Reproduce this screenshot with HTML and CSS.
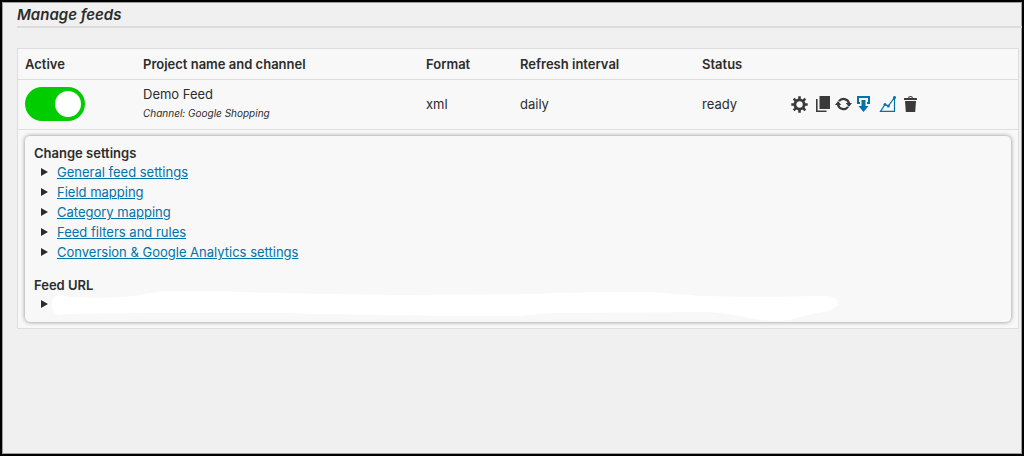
FILE: index.html
```html
<!DOCTYPE html>
<html lang="en">
<head>
  <meta charset="UTF-8" />
  <meta name="viewport" content="width=device-width, initial-scale=1" />
  <title>Manage feeds</title>
  <link rel="stylesheet" href="styles.css">
</head>
<body>

<main class="wrap">
  <h1 class="page-title">Manage feeds</h1>

  <table class="feeds">
    <colgroup>
      <col class="col-active">
      <col class="col-project">
      <col class="col-format">
      <col class="col-refresh">
      <col class="col-status">
      <col>
    </colgroup>
    <thead>
      <tr>
        <th>Active</th>
        <th>Project name and channel</th>
        <th>Format</th>
        <th>Refresh interval</th>
        <th>Status</th>
        <th></th>
      </tr>
    </thead>
    <tbody>
      <tr class="feed-row">
        <td><input type="checkbox" class="switch" id="feedActive" checked></td>
        <td>
          <label class="feed-name" for="feedActive">Demo Feed</label>
          <div class="feed-channel">Channel: Google Shopping</div>
        </td>
        <td>xml</td>
        <td>daily</td>
        <td>ready</td>
        <td>
          <div class="actions">
            <button type="button" class="action" aria-label="Settings">
              <svg width="17" height="17" viewBox="0 0 17 17">
                <circle cx="8.5" cy="8.5" r="4.6" fill="none" stroke="currentColor" stroke-width="2.8"/>
                <path d="M8.5 .3v3M8.5 13.700v3M.3 8.500h3M13.700 8.500h3M2.700 2.700l2.100 2.100M12.200 12.200l2.100 2.100M14.300 2.700l-2.100 2.100M4.800 12.200l-2.100 2.100" stroke="currentColor" stroke-width="2.600"/>
              </svg>
            </button>
            <div class="action-group">
              <button type="button" class="action" aria-label="Copy">
                <svg width="14" height="16" viewBox="0 0 14 16">
                  <path d="M3.500 0H14v13H3.500z" fill="currentColor"/>
                  <path d="M.8 3v12.200H10.500" fill="none" stroke="currentColor" stroke-width="1.600"/>
                </svg>
              </button>
              <button type="button" class="action" aria-label="Refresh">
                <svg width="17" height="16" viewBox="0 0 17 16">
                  <path d="M4 5.200A5.600 5.600 0 0 1 14 7.500M13 10.800A5.600 5.600 0 0 1 3 8.500" fill="none" stroke="currentColor" stroke-width="2.200"/>
                  <path d="M10.800 7H17l-3.100 4zM0 9h6.200L3.100 5z" fill="currentColor"/>
                </svg>
              </button>
              <button type="button" class="action action-blue" aria-label="Download">
                <svg width="13" height="16" viewBox="0 0 13 16">
                  <path d="M0 0h13v8h-3V6h1V2H2v4h1v2H0z" fill="currentColor"/>
                  <path d="M4.500 4h4v6H11.500l-5 6-5-6h3z" fill="currentColor"/>
                </svg>
              </button>
            </div>
            <button type="button" class="action action-blue" aria-label="Statistics">
              <svg width="18" height="16" viewBox="0 0 18 16">
                <path d="M2.500 15.300L7 8.500l3.300 1.500 6.200-8.500v13.800z" fill="none" stroke="currentColor" stroke-width="1.200"/>
                <g fill="currentColor">
                  <circle cx="7" cy="8.500" r="1.500"/>
                  <circle cx="10.300" cy="10" r="1.500"/>
                  <circle cx="16.500" cy="1.500" r="1.500"/>
                </g>
              </svg>
            </button>
            <button type="button" class="action" aria-label="Delete">
              <svg width="13" height="16" viewBox="0 0 13 16">
                <path d="M0 4V2.500Q0 2 .6 2H4Q4.300 0 6.500 0T9 2h3.400q.6 0 .6.500V4zM5.200 2h2.600Q7.600 1 6.500 1T5.200 2zM1 5h11l-.8 11H1.800z" fill="currentColor" fill-rule="evenodd"/>
              </svg>
            </button>
          </div>
        </td>
      </tr>
      <tr class="detail-row">
        <td colspan="6">
          <div class="panel">
            <h2 class="panel-title">Change settings</h2>
            <ul class="panel-list">
              <li><a href="#">General feed settings</a></li>
              <li><a href="#">Field mapping</a></li>
              <li><a href="#">Category mapping</a></li>
              <li><a href="#">Feed filters and rules</a></li>
              <li><a href="#">Conversion &amp; Google Analytics settings</a></li>
            </ul>

            <h2 class="panel-title">Feed URL</h2>
            <ul class="panel-list">
              <li>
                <!-- hidden feed address -->
                <svg class="url-mask" width="782" height="20" viewBox="0 0 782 20">
                  <path d="M-5 10Q-5 1 3 1L11 3Q60 5 83 1Q100-3 123-3H163L213-1L343 1L473 0L538-2H593L643 2L703 3L763 2Q781 1 781 9Q780 16 760 19L743 23Q733 27 718 27Q705 27 678 21L653 18L493 19L463 22H383L343 21L253 20L233 19H93L8 20Q-5 24-5 10z" fill="#fff"/>
                </svg>
              </li>
            </ul>
          </div>
        </td>
      </tr>
    </tbody>
  </table>
</main>

</body>
</html>
```
FILE: styles.css
```css
* {
  box-sizing: border-box;
}
body {
  margin: 0;
  font-family: Inter, 'Open Sans', sans-serif;
  font-size: 13px;
  line-height: 18px;
  color: #2c2c2c;
  background: #f0f0f0;
}
.wrap {
  min-height: 100vh;
  padding-left: 15px;
  border: 2px solid #000;
  box-shadow: inset 0 0 0 1px #a0a0a0;
}
.page-title {
  margin: 0 0 20px;
  padding-top: 2px;
  border-bottom: 2px solid #dcdcdc;
  font-size: 15px;
  line-height: 22px;
  font-weight: 600;
  font-style: italic;
}

/* Feed table */
.feeds {
  width: calc(100% - 3px);
  table-layout: fixed;
  border-collapse: separate;
  border-spacing: 0;
  border: 1px solid #dedede;
  background: #f8f8f8;
}
.col-active {
  width: 117px;
}
.col-project {
  width: 283px;
}
.col-format {
  width: 94px;
}
.col-refresh {
  width: 182px;
}
.col-status {
  width: 89px;
}
.feeds th,
.feeds td {
  padding: 0 8px;
  text-align: left;
  vertical-align: middle;
  border-bottom: 1px solid #dedede;
}
.feeds th:first-child,
.feeds td:first-child {
  padding-left: 7px;
}
.feeds th {
  height: 31px;
  font-weight: 600;
}
.feeds .feed-row td {
  height: 50px;
  padding-bottom: 1px;
}
.feeds .detail-row td {
  padding: 6px 7px;
  border-bottom: 0;
}
.feed-name {
  display: block;
  line-height: 19px;
}
.feed-channel {
  font-size: 10px;
  line-height: 19px;
  font-style: italic;
}

/* On/off switch */
.switch {
  appearance: none;
  display: block;
  width: 60px;
  height: 34px;
  margin: 0;
  padding: 4px;
  border-radius: 17px;
  background: #ccc;
  cursor: pointer;
}
.switch::before {
  content: '';
  display: block;
  width: 26px;
  height: 26px;
  border-radius: 50%;
  background: #fff;
}
.switch:checked {
  background: #00cc00;
}
.switch:checked::before {
  margin-left: auto;
}

/* Row icons */
.actions {
  display: flex;
  align-items: center;
  gap: 8px;
}
.action-group {
  display: flex;
  align-items: center;
  gap: 5px;
}
.action {
  padding: 0;
  border: 0;
  background: none;
  color: #3a3a3a;
  cursor: pointer;
}
.action svg {
  display: block;
}
.action-blue {
  color: #0073aa;
}

/* Settings panel */
.panel {
  padding: 8px 9px;
  border-radius: 5px;
  background: #f8f8f8;
  box-shadow: 0 0 4px #888;
}
.panel-title {
  margin: 0;
  font-size: 13px;
  line-height: 18px;
  font-weight: 600;
}
.panel-list {
  margin: 0;
  padding: 0 0 0 7px;
  list-style: none;
}
.panel-list + .panel-title {
  margin-top: 14px;
}
.panel-list li {
  display: flex;
  align-items: center;
  gap: 9px;
  height: 20px;
}
.panel-list li::before {
  content: '';
  border-left: 7px solid #2c2c2c;
  border-top: 4px solid transparent;
  border-bottom: 4px solid transparent;
}
.panel-list a {
  color: #0073aa;
  text-decoration: underline;
}
.url-mask {
  overflow: visible;
}
```
